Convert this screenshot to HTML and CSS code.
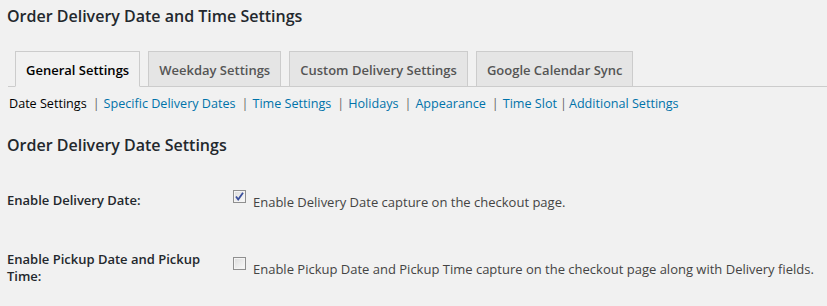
FILE: index.html
```html
<!DOCTYPE html>
<html lang="en">
<head>
    <meta charset="UTF-8">
    <title>Order Delivery Date and Time Settings</title>
    <link rel="stylesheet" href="styles.css">
</head>
<body>
    <div class="wrap">
        <h1 class="page-title">Order Delivery Date and Time Settings</h1>

        <nav class="nav-tab-wrapper">
            <a class="nav-tab nav-tab-active">General Settings</a>
            <a class="nav-tab">Weekday Settings</a>
            <a class="nav-tab">Custom Delivery Settings</a>
            <a class="nav-tab">Google Calendar Sync</a>
        </nav>

        <ul class="subsubsub">
            <li class="current">Date Settings</li>
            <li><span class="sep">|</span><a>Specific Delivery Dates</a></li>
            <li><span class="sep">|</span><a>Time Settings</a></li>
            <li><span class="sep">|</span><a>Holidays</a></li>
            <li><span class="sep">|</span><a>Appearance</a></li>
            <li><span class="sep">|</span><a>Time Slot</a></li>
            <li><span class="sep tight">|</span><a>Additional Settings</a></li>
        </ul>

        <h2 class="section-title">Order Delivery Date Settings</h2>

        <div class="form-table">
            <div class="form-row">
                <div class="form-label">Enable Delivery Date:</div>
                <div class="form-field">
                    <span class="checkbox checked">
                        <svg width="9" height="9" viewBox="0 0 9 9"><path d="M1 4.5 L3.2 7.5 L8 0.8" fill="none" stroke="#3a4f9c" stroke-width="1.8"/></svg>
                    </span>
                    <span class="field-text">Enable Delivery Date capture on the checkout page.</span>
                </div>
            </div>
            <div class="form-row">
                <div class="form-label">Enable Pickup Date and Pickup Time:</div>
                <div class="form-field">
                    <span class="checkbox"></span>
                    <span class="field-text">Enable Pickup Date and Pickup Time capture on the checkout page along with Delivery fields.</span>
                </div>
            </div>
        </div>
    </div>
</body>
</html>
```

FILE: styles.css
```css
body {
    margin: 0;
    padding: 0;
    background-color: #f1f1f1;
    color: #444;
    font-family: "Open Sans", sans-serif;
    font-size: 13px;
}

.wrap {
    padding: 0 0 0 7px;
}

.page-title {
    margin: 0;
    padding: 5px 0 0;
    font-size: 16px;
    font-weight: 600;
    line-height: 22px;
    color: #23282d;
}

.nav-tab-wrapper {
    display: flex;
    margin: 24px 0 0 1px;
    padding-left: 7px;
    border-bottom: 1px solid #ccc;
}

.nav-tab {
    margin-left: 8px;
    margin-bottom: -1px;
    padding: 1px 10px 0;
    height: 33px;
    line-height: 34px;
    border: 1px solid #ccc;
    background-color: #e5e5e5;
    color: #555;
    font-size: 13px;
    font-weight: 600;
}

.nav-tab:first-child {
    margin-left: 0;
}

.nav-tab-active {
    background-color: #f1f1f1;
    border-bottom-color: #f1f1f1;
    color: #000;
}

.subsubsub {
    display: flex;
    margin: 0;
    padding: 7px 0 0 2px;
    list-style: none;
    font-size: 12.6px;
    line-height: 20px;
    color: #666;
}

.subsubsub .current {
    color: #000;
}

.subsubsub a {
    color: #0073aa;
}

.sep {
    padding: 0 4px 0 6px;
}

.sep.tight {
    padding: 0 2px 0 3px;
}

.section-title {
    margin: 0;
    padding: 20px 0 0;
    font-size: 16px;
    font-weight: 600;
    line-height: 22px;
    color: #23282d;
}

.form-table {
    margin-top: 11px;
}

.form-row {
    display: flex;
    align-items: center;
    height: 67px;
}

.form-label {
    width: 200px;
    padding-right: 26px;
    font-size: 13px;
    font-weight: 600;
    line-height: 17px;
    color: #23282d;
}

.form-field {
    display: flex;
    align-items: flex-start;
    padding-top: 1px;
    font-size: 13px;
    line-height: 20px;
}

.checkbox {
    display: flex;
    align-items: center;
    justify-content: center;
    box-sizing: border-box;
    width: 13px;
    height: 13px;
    margin-right: 7px;
    border: 1px solid #8f8f8f;
    background: linear-gradient(135deg, #dcdcdc, #fafafa);
    box-shadow: inset 0 0 0 1px #f4f4f4;
}

.field-text {
    margin-top: 2px;
}
```
